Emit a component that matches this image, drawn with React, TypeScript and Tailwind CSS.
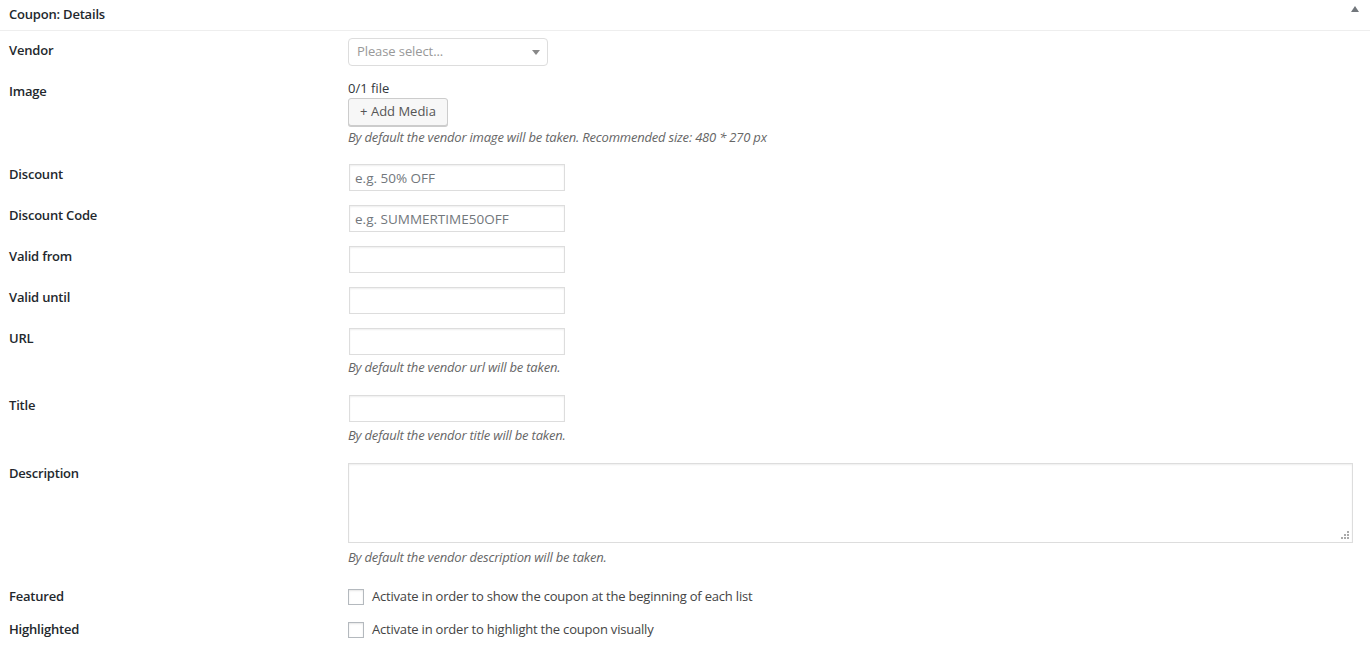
import React from "react";

const font = { fontFamily: '"Open Sans", "Noto Sans", sans-serif' };

function Label({ children, className = "" }: { children: React.ReactNode; className?: string }) {
  return (
    <div className={`w-[339px] shrink-0 text-[13px] font-semibold leading-[19px] tracking-[-0.2px] text-[#23282d] ${className}`}>
      {children}
    </div>
  );
}

function Help({ children, className = "" }: { children: React.ReactNode; className?: string }) {
  return <p className={`text-[13px] italic leading-[19px] tracking-[-0.2px] text-[#666] ${className}`}>{children}</p>;
}

function TextInput({ placeholder }: { placeholder?: string }) {
  return (
    <input
      type="text"
      placeholder={placeholder}
      className="ml-px block h-[27px] w-[216px] border border-[#ddd] bg-white px-[5px] text-[13.5px] text-[#32373c] shadow-[inset_0_1px_2px_rgba(0,0,0,0.07)] outline-none placeholder:text-[#72777c]"
    />
  );
}

function Checkbox({ text }: { text: string }) {
  return (
    <label className="flex items-center text-[13px] leading-[19px] tracking-[-0.2px] text-[#444]">
      <span className="block h-4 w-4 shrink-0 border border-[#b4b9be] bg-white shadow-[inset_0_1px_2px_rgba(0,0,0,0.1)]" />
      <span className="ml-[8px]">{text}</span>
    </label>
  );
}

export default function App() {
  return (
    <div style={font} className="min-h-[647px] w-full bg-white text-[13px] text-[#444]">
      <div className="flex h-[31px] items-center justify-between border-b border-[#eee] pl-[9px] pr-[9px]">
        <h2 className="text-[13px] font-semibold tracking-[-0.2px] text-[#23282d]">Coupon: Details</h2>
        <svg width="8" height="6" viewBox="0 0 8 6" className="-mt-[12px] mr-[2px]">
          <path d="M4 0L8 6H0z" fill="#72777c" />
        </svg>
      </div>

      <div className="px-[9px] pt-[7px]">
        {/* Vendor */}
        <div className="flex pb-[14px]">
          <Label className="pt-[3px]">Vendor</Label>
          <div className="relative flex h-[28px] w-[200px] items-center rounded-[4px] border border-[#ddd] bg-white pl-[8px]">
            <span className="text-[13px] tracking-[-0.1px] text-[#999]">Please select...</span>
            <svg width="8" height="5" viewBox="0 0 8 5" className="absolute right-[7px] top-[11px]">
              <path d="M0 0H8L4 5z" fill="#888" />
            </svg>
          </div>
        </div>

        {/* Image */}
        <div className="flex pb-[14px]">
          <Label className="pt-[2px]">Image</Label>
          <div className="flex flex-col items-start">
            <span className="leading-[16px] text-[#32373c]">0/1 file</span>
            <button className="mt-[2px] h-[28px] w-[100px] rounded-[3px] border border-[#ccc] bg-[#f7f7f7] text-[13px] text-[#555] shadow-[0_1px_0_#ccc]">
              + Add Media
            </button>
            <Help className="mt-[2px] mb-[3px]">By default the vendor image will be taken. Recommended size: 480 * 270 px</Help>
          </div>
        </div>

        <div className="flex pb-[14px]">
          <Label className="pt-px">Discount</Label>
          <TextInput placeholder="e.g. 50% OFF" />
        </div>

        <div className="flex pb-[14px]">
          <Label className="pt-px">Discount Code</Label>
          <TextInput placeholder="e.g. SUMMERTIME50OFF" />
        </div>

        <div className="flex pb-[14px]">
          <Label className="pt-px">Valid from</Label>
          <TextInput />
        </div>

        <div className="flex pb-[14px]">
          <Label className="pt-px">Valid until</Label>
          <TextInput />
        </div>

        <div className="flex pb-[14px]">
          <Label className="pt-px">URL</Label>
          <div className="flex flex-col">
            <TextInput />
            <Help className="mt-[3px] mb-[4px]">By default the vendor url will be taken.</Help>
          </div>
        </div>

        <div className="flex pb-[14px]">
          <Label className="pt-px">Title</Label>
          <div className="flex flex-col">
            <TextInput />
            <Help className="mt-[4px] mb-[4px]">By default the vendor title will be taken.</Help>
          </div>
        </div>

        <div className="flex pb-[14px]">
          <Label className="pt-px">Description</Label>
          <div className="flex flex-1 flex-col pr-[8px]">
            <div className="relative h-[80px] w-full border border-[#ddd] bg-white shadow-[inset_0_1px_2px_rgba(0,0,0,0.07)]">
              <svg width="9" height="9" viewBox="0 0 9 9" className="absolute bottom-[2px] right-[2px]">
                <rect x="6" y="0" width="2" height="2" fill="#aaa" />
                <rect x="3" y="3" width="2" height="2" fill="#aaa" />
                <rect x="6" y="3" width="2" height="2" fill="#aaa" />
                <rect x="0" y="6" width="2" height="2" fill="#aaa" />
                <rect x="3" y="6" width="2" height="2" fill="#aaa" />
                <rect x="6" y="6" width="2" height="2" fill="#aaa" />
              </svg>
            </div>
            <Help className="mt-[5px] mb-[6px]">By default the vendor description will be taken.</Help>
          </div>
        </div>

        <div className="flex pb-[14px]">
          <Label>Featured</Label>
          <Checkbox text="Activate in order to show the coupon at the beginning of each list" />
        </div>

        <div className="flex pb-[14px]">
          <Label>Highlighted</Label>
          <Checkbox text="Activate in order to highlight the coupon visually" />
        </div>
      </div>
    </div>
  );
}
